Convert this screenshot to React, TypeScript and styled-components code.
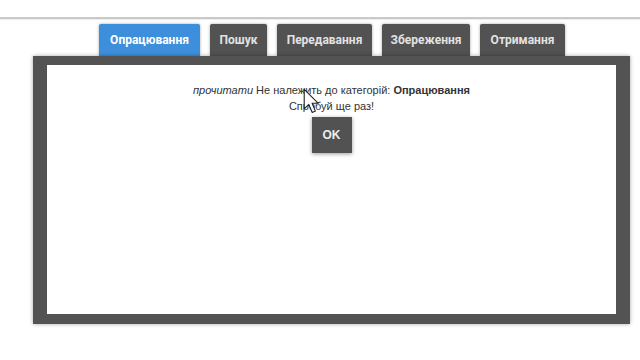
import React from "react";
import styled, { createGlobalStyle } from "styled-components";

const Global = createGlobalStyle`
  html, body { margin: 0; padding: 0; background: #ffffff; }
  body { font-family: "Liberation Sans", Arial, sans-serif; width: 640px; height: 360px; overflow: hidden; }
`;

const TopRule = styled.div`
  margin-top: 17px;
  height: 2px;
  background: #c9c9c9;
  box-shadow: 0 1px 1px rgba(0,0,0,0.08);
`;

const Stage = styled.div`
  position: relative;
  margin-left: 33px;
  width: 597px;
`;

const TabRow = styled.div`
  display: flex;
  justify-content: center;
  gap: 10px;
  margin-top: 5px;
  padding-left: 1px;
`;

const Tab = styled.div<{ $active?: boolean; $w: number }>`
  width: ${(p) => p.$w}px;
  height: 32px;
  box-sizing: border-box;
  display: flex;
  align-items: center;
  justify-content: center;
  background: ${(p) => (p.$active ? "#3d8fdc" : "#525252")};
  color: ${(p) => (p.$active ? "#ffffff" : "#e2e2e2")};
  font-family: "Roboto", "Liberation Sans", sans-serif;
  font-weight: 700;
  font-size: 12px;
  border-radius: 2px 2px 0 0;
  box-shadow: 0 0 3px rgba(0,0,0,0.35);
`;

const Panel = styled.div`
  box-sizing: border-box;
  height: 268px;
  background: #535353;
  padding: 9px 14px 10px 14px;
  box-shadow: 0 0 4px rgba(0,0,0,0.35);
  position: relative;
`;

const Content = styled.div`
  height: 100%;
  background: #ffffff;
  display: flex;
  flex-direction: column;
  align-items: center;
  padding-top: 17px;
  box-sizing: border-box;
  color: #333333;
  font-size: 11px;
  line-height: 16px;
`;

const Line = styled.div`
  text-align: center;
`;

const Em = styled.span`
  font-style: italic;
`;

const Strong = styled.span`
  font-weight: 700;
`;

const OkButton = styled.button`
  margin-top: 3px;
  width: 40px;
  height: 36px;
  border: none;
  background: #525252;
  color: #eeeeee;
  font-family: "Liberation Sans", Arial, sans-serif;
  font-weight: 700;
  font-size: 12px;
  box-shadow: 0 1px 4px rgba(0,0,0,0.4);
  padding: 0;
`;

const Cursor = styled.svg`
  position: absolute;
  left: 270px;
  top: 32px;
  width: 17px;
  height: 27px;
  pointer-events: none;
`;

const tabs = [
  { label: "Опрацювання", w: 101, active: true },
  { label: "Пошук", w: 57 },
  { label: "Передавання", w: 95 },
  { label: "Збереження", w: 88 },
  { label: "Отримання", w: 85 },
];

export default function App() {
  return (
    <>
      <Global />
      <TopRule />
      <Stage>
        <TabRow>
          {tabs.map((t) => (
            <Tab key={t.label} $active={t.active} $w={t.w}>
              {t.label}
            </Tab>
          ))}
        </TabRow>
        <Panel>
          <Content>
            <Line>
              <Em>прочитати</Em> Не належить до категорій: <Strong>Опрацювання</Strong>
            </Line>
            <Line>Спробуй ще раз!</Line>
            <OkButton>OK</OkButton>
          </Content>
          <Cursor viewBox="0 0 14 22">
            <path
              d="M1 1 L1 17 L4.8 13.4 L7.6 20 L10.2 18.9 L7.5 12.5 L12.6 12.5 Z"
              fill="#ffffff"
              stroke="#222222"
              strokeWidth="0.9"
              strokeLinejoin="round"
            />
          </Cursor>
        </Panel>
      </Stage>
    </>
  );
}
